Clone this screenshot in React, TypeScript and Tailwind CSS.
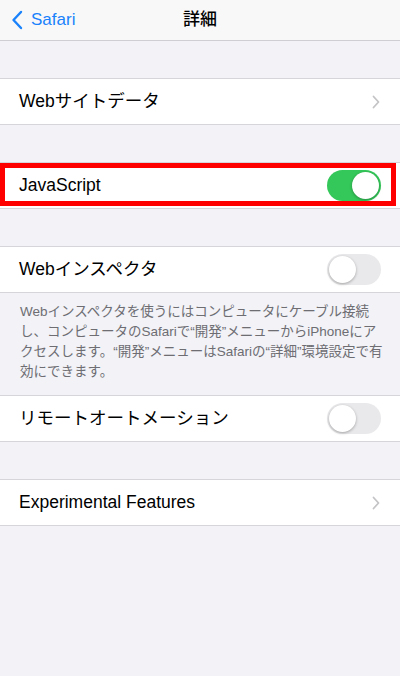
import React from 'react';

const font = { fontFamily: '"Liberation Sans", "Noto Sans CJK JP", sans-serif' };

const Chevron = () => (
  <svg width="8" height="14" viewBox="0 0 8 14" className="mr-[20px]">
    <path d="M1.5 1.5 L6.5 7 L1.5 12.5" fill="none" stroke="#c4c4c7" strokeWidth="1.8" strokeLinecap="round" strokeLinejoin="round" />
  </svg>
);

const Toggle = ({ on }: { on: boolean }) => (
  <div
    className={`mr-[19px] flex h-[31px] w-[54px] items-center rounded-full p-[2px] ${
      on ? 'justify-end bg-[#34c759]' : 'justify-start bg-[#e9e9eb]'
    }`}
  >
    <div className="h-[27px] w-[27px] rounded-full bg-white shadow-[0_1px_3px_rgba(0,0,0,0.3)]" />
  </div>
);

const Row = ({ label, children }: { label: string; children?: React.ReactNode }) => (
  <div className="flex h-[47px] items-center justify-between border-y border-[#d6d6da] bg-white">
    <span className="pl-[19px] text-[17.5px] text-black">{label}</span>
    {children}
  </div>
);

const Gap = () => <div className="h-[37px]" />;

export default function App() {
  return (
    <div className="min-h-[676px] w-[400px] bg-[#f2f2f7]" style={font}>
      <div className="relative flex h-[41px] items-center border-b border-[#cfcfd3] bg-[#f8f8f8]">
        <div className="flex items-center pl-[11px] text-[#1a82fb]">
          <svg width="12" height="20" viewBox="0 0 12 20">
            <path d="M10 2 L2.5 10 L10 18" fill="none" stroke="#1a82fb" strokeWidth="2.4" strokeLinecap="round" strokeLinejoin="round" />
          </svg>
          <span className="ml-[8px] text-[17px]">Safari</span>
        </div>
        <span className="absolute left-1/2 -translate-x-1/2 text-[17px] font-medium text-black">詳細</span>
      </div>

      <Gap />
      <Row label="Webサイトデータ">
        <Chevron />
      </Row>
      <Gap />
      <div className="relative">
        <Row label="JavaScript">
          <Toggle on />
        </Row>
        <div className="absolute top-[1px] right-[4px] bottom-[3px] left-0 border-[5px] border-[#ff0000]" />
      </div>
      <Gap />
      <Row label="Webインスペクタ">
        <Toggle on={false} />
      </Row>
      <div className="whitespace-nowrap px-[20px] pt-[9px] pb-[13px] text-[13.5px] leading-[20px] text-[#6d6d72]">
        Webインスペクタを使うにはコンピュータにケーブル接続
        <br />
        し、コンピュータのSafariで“開発”メニューからiPhoneにア
        <br />
        クセスします。“開発”メニューはSafariの“詳細”環境設定で有
        <br />
        効にできます。
      </div>
      <Row label="リモートオートメーション">
        <Toggle on={false} />
      </Row>
      <Gap />
      <Row label="Experimental Features">
        <Chevron />
      </Row>
    </div>
  );
}
